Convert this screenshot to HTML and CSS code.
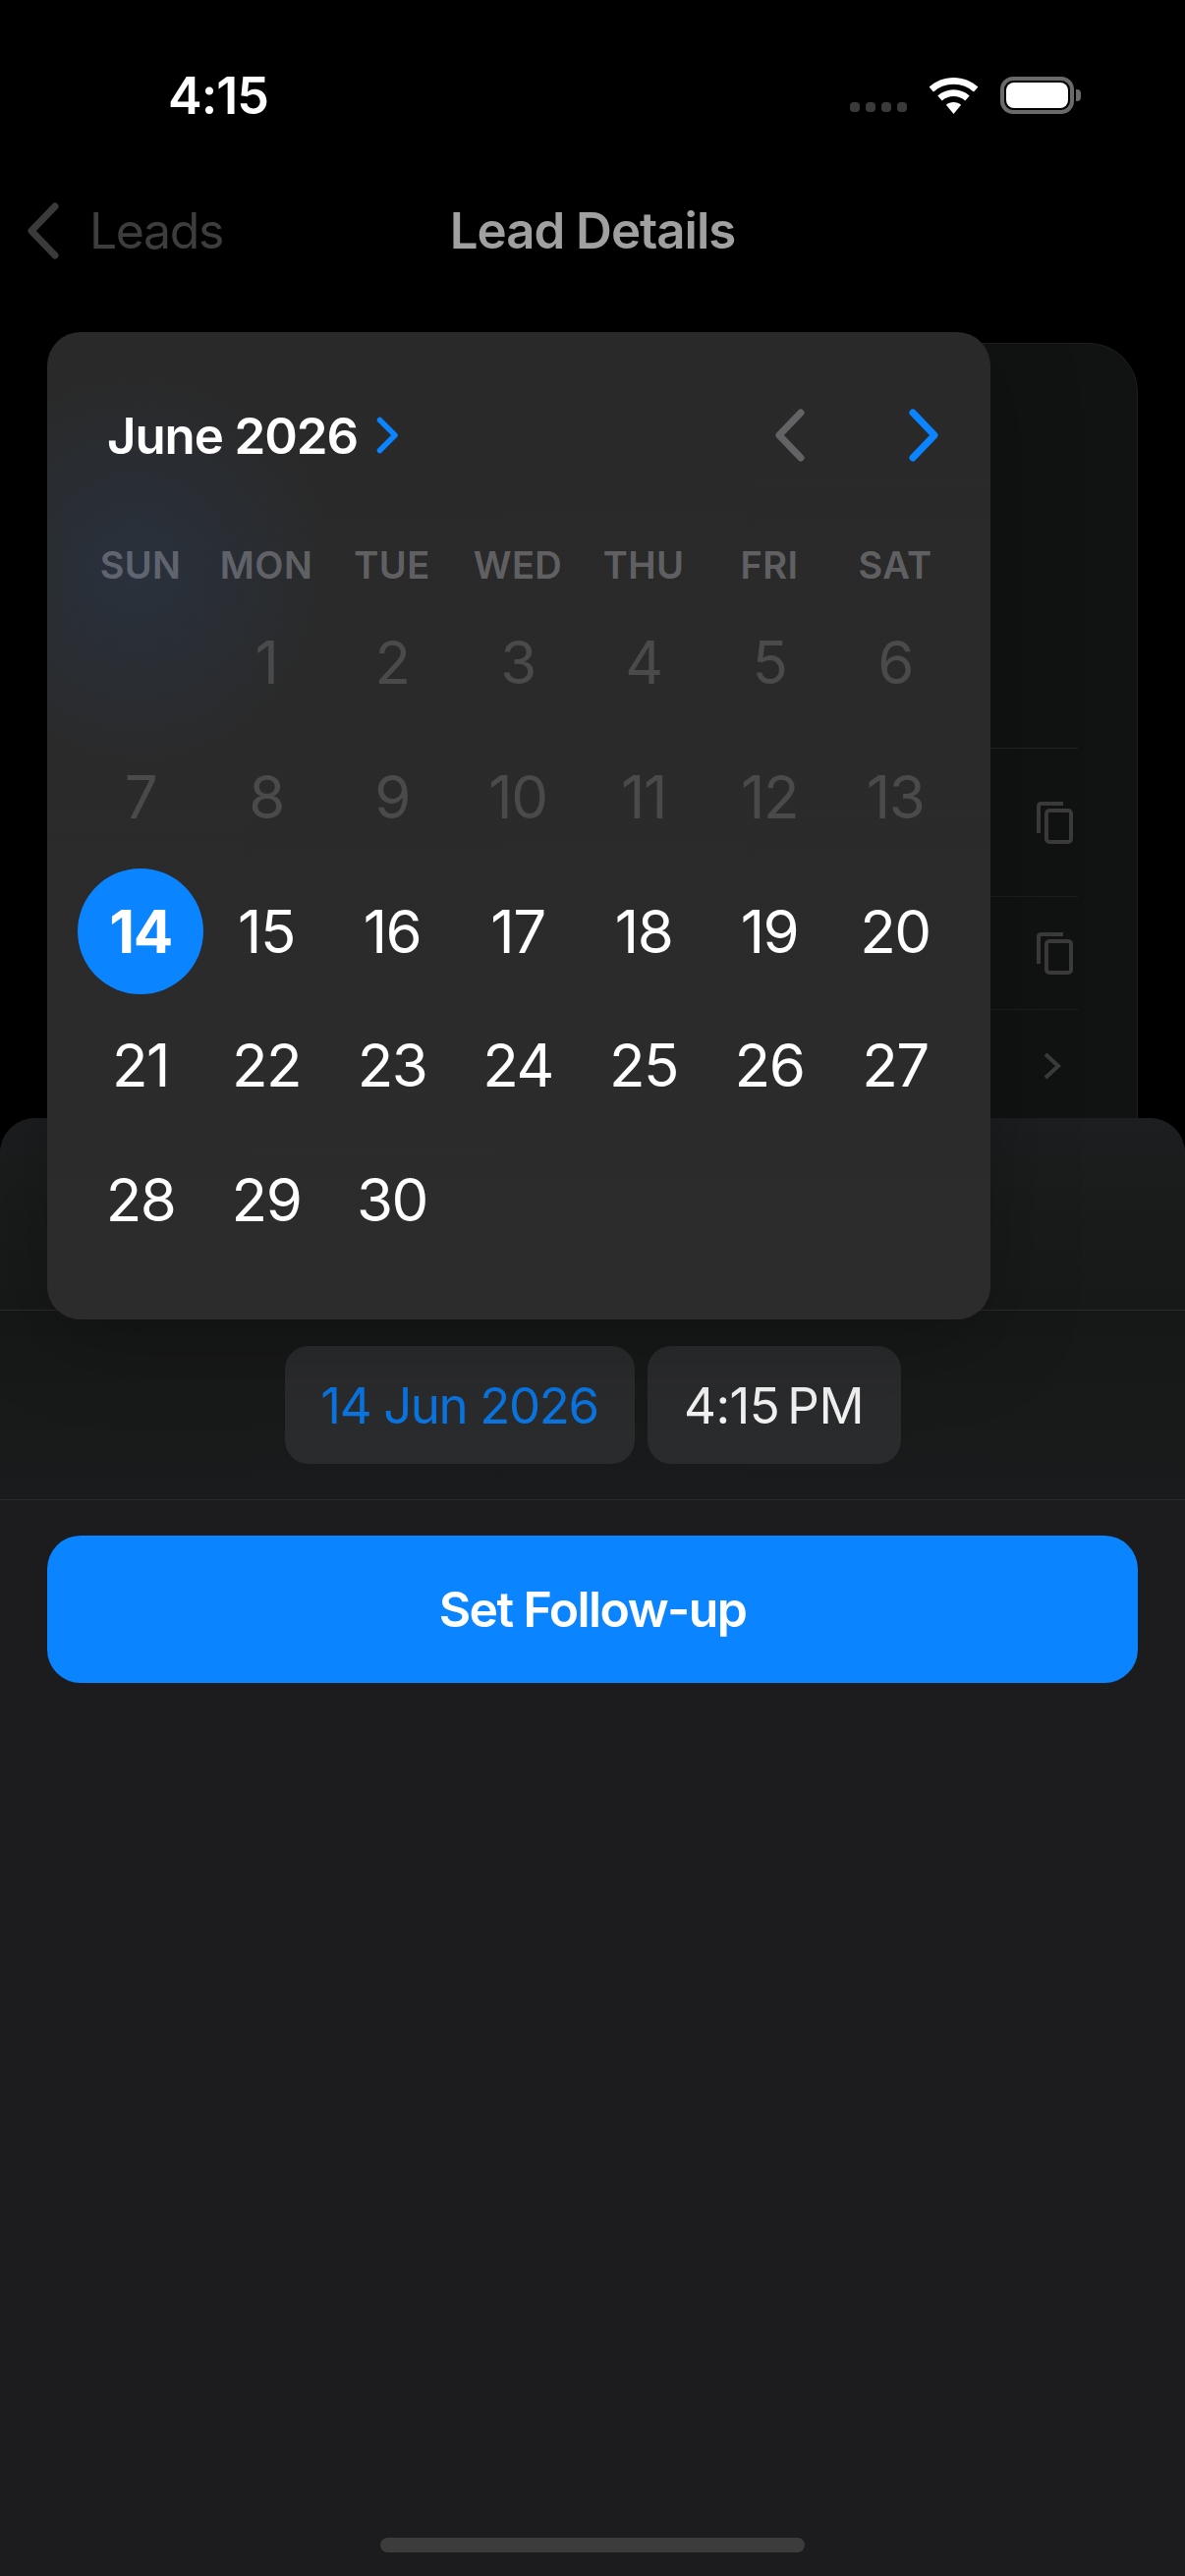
FILE: index.html
```html
<!DOCTYPE html>
<html lang="en">
<head>
  <meta charset="UTF-8" />
  <meta name="viewport" content="width=device-width, initial-scale=1.0" />
  <title>Lead Details</title>
  <link rel="stylesheet" href="styles.css">
</head>
<body>
  <div class="screen">
    <div class="status-bar">
      <span class="clock">4:15</span>
      <div class="status-icons">
        <div class="signal"><i></i><i></i><i></i><i></i></div>
        <svg class="wifi" width="51" height="37" viewBox="0 0 51 37">
          <path d="M25.5 0C15.7 0 7.2 3.6 0.6 9.6L5 14.6C10.4 9.7 17.5 6.7 25.5 6.7S40.600 9.700 46 14.600L50.400 9.600C43.800 3.600 35.300 0 25.500 0Z" fill="#fff"/>
          <path d="M25.500 12.300C19.200 12.300 13.700 14.600 9.300 18.500L13.700 23.500C17 20.700 21 19 25.500 19S34 20.700 37.300 23.500L41.700 18.500C37.300 14.600 31.800 12.300 25.500 12.300Z" fill="#fff"/>
          <path d="M25.500 25C22.600 25 20 26 17.900 27.800L25.500 37L33.100 27.800C31 26 28.400 25 25.500 25Z" fill="#fff"/>
        </svg>
        <div class="battery"><div class="battery-level"></div></div>
      </div>
    </div>

    <div class="nav-bar">
      <div class="nav-back">
        <svg width="34" height="58" viewBox="0 0 34 58"><path d="M29 4L5 29L29 54" fill="none" stroke="#3a3a3a" stroke-width="7" stroke-linecap="round" stroke-linejoin="round"/></svg>
        <span>Leads</span>
      </div>
      <h1 class="nav-title">Lead Details</h1>
    </div>

    <div class="lead-card">
      <div class="card-top"></div>
      <div class="card-row card-row-first">
        <svg width="37" height="43" viewBox="0 0 37 43"><path d="M27 2H4.500Q2 2 2 4.500V32" fill="none" stroke="#3b3b3b" stroke-width="4"/><rect x="10" y="9" width="25" height="32" rx="3" fill="none" stroke="#3b3b3b" stroke-width="4"/></svg>
      </div>
      <div class="card-row">
        <svg width="37" height="43" viewBox="0 0 37 43"><path d="M27 2H4.500Q2 2 2 4.500V32" fill="none" stroke="#3b3b3b" stroke-width="4"/><rect x="10" y="9" width="25" height="32" rx="3" fill="none" stroke="#3b3b3b" stroke-width="4"/></svg>
      </div>
      <div class="card-row card-row-link">
        <svg width="18" height="28" viewBox="0 0 18 28"><path d="M2 2L15 14L2 26" fill="none" stroke="#3b3b3b" stroke-width="4"/></svg>
      </div>
    </div>

    <div class="sheet">
      <div class="sheet-head"></div>
      <div class="picker-row">
        <button class="pill pill-date">14 Jun 2026</button>
        <button class="pill pill-time">4:15<span class="ampm">PM</span></button>
      </div>
      <button class="btn-primary">Set Follow-up</button>
      <div class="home-indicator"></div>
    </div>

    <div class="calendar">
      <div class="cal-header">
        <div class="cal-month">
          <span>June 2026</span>
          <svg width="23" height="38" viewBox="0 0 23 38"><path d="M3.500 3.500L19 19L3.500 34.500" fill="none" stroke="#0a84ff" stroke-width="5.500" stroke-linecap="round" stroke-linejoin="round"/></svg>
        </div>
        <div class="cal-arrows">
          <svg width="32" height="54" viewBox="0 0 32 54"><path d="M27 4L5 27L27 50" fill="none" stroke="#636366" stroke-width="7" stroke-linecap="round" stroke-linejoin="round"/></svg>
          <svg width="32" height="54" viewBox="0 0 32 54"><path d="M5 4L27 27L5 50" fill="none" stroke="#0a84ff" stroke-width="7" stroke-linecap="round" stroke-linejoin="round"/></svg>
        </div>
      </div>

      <div class="cal-weekdays">
        <span>SUN</span><span>MON</span><span>TUE</span><span>WED</span><span>THU</span><span>FRI</span><span>SAT</span>
      </div>

      <div class="cal-days">
        <span></span>
        <span class="day-off">1</span><span class="day-off">2</span><span class="day-off">3</span><span class="day-off">4</span><span class="day-off">5</span><span class="day-off">6</span>
        <span class="day-off">7</span><span class="day-off">8</span><span class="day-off">9</span><span class="day-off">10</span><span class="day-off">11</span><span class="day-off">12</span><span class="day-off">13</span>
        <span class="day-selected">14</span><span>15</span><span>16</span><span>17</span><span>18</span><span>19</span><span>20</span>
        <span>21</span><span>22</span><span>23</span><span>24</span><span>25</span><span>26</span><span>27</span>
        <span>28</span><span>29</span><span>30</span>
      </div>
    </div>
  </div>
</body>
</html>
```

FILE: styles.css
```css
* { margin: 0; padding: 0; box-sizing: border-box; }
html, body { background: #000; }
body {
  font-family: Inter, "Liberation Sans", sans-serif;
  color: #fff;
}
button { font-family: inherit; border: none; }

.screen {
  position: relative;
  width: 1206px;
  height: 2622px;
  overflow: hidden;
  background: #000;
}

/* status bar */
.status-bar {
  height: 170px;
  padding: 72px 113px 0 171px;
  display: flex;
  justify-content: space-between;
  align-items: flex-start;
}
.clock { font-size: 52px; line-height: 52px; font-weight: 600; letter-spacing: -1px; }
.status-icons { display: flex; align-items: flex-end; padding-top: 6px; }
.signal { display: flex; gap: 6px; margin-right: 22px; margin-bottom: 2px; }
.signal i { width: 10px; height: 10px; border-radius: 4px; background: #3a3a3a; }
.wifi { margin-right: 22px; }
.battery {
  position: relative;
  width: 75px;
  height: 38px;
  border: 4px solid #6a6a6a;
  border-radius: 13px;
  padding: 2px;
}
.battery::after {
  content: "";
  position: absolute;
  right: -11px;
  top: 9px;
  width: 5px;
  height: 12px;
  background: #6a6a6a;
  border-radius: 0 4px 4px 0;
}
.battery-level { height: 100%; background: #fff; border-radius: 8px; }

/* nav */
.nav-bar {
  position: relative;
  height: 128px;
  display: flex;
  align-items: center;
  justify-content: center;
}
.nav-back {
  position: absolute;
  left: 27px;
  top: 35px;
  display: flex;
  align-items: center;
  gap: 30px;
  font-size: 50px;
  letter-spacing: -1.400px;
  color: #3d3d3d;
}
.nav-title {
  font-size: 51px;
  font-weight: 600;
  letter-spacing: -1px;
  color: #a0a0a0;
  white-space: nowrap;
}

/* card behind the picker */
.lead-card {
  margin: 51px 48px 0;
  height: 900px;
  background: #111312;
  border: 1px solid #1e1f1f;
  border-radius: 50px;
}
.card-top { height: 411px; }
.card-row {
  height: 115px;
  margin-right: 60px;
  border-top: 1px solid #1c1d1d;
  display: flex;
  align-items: center;
  justify-content: flex-end;
  padding-right: 5px;
}
.card-row-first { height: 151px; border-top-color: #242525; }
.card-row-link { padding-right: 17px; }

/* bottom sheet */
.sheet {
  position: absolute;
  left: 0;
  right: 0;
  top: 1138px;
  bottom: 0;
  background: #1c1c1e;
  border-radius: 36px 36px 0 0;
}
.sheet-head {
  height: 196px;
  background: linear-gradient(180deg, #1c1e1f 0%, #171918 100%);
  border-radius: 36px 36px 0 0;
  border-bottom: 1px solid #2a2b2c;
}
.picker-row {
  display: flex;
  justify-content: center;
  gap: 13px;
  padding: 36px 0;
  background: linear-gradient(180deg, #161817 0%, #1a1b1c 100%);
  border-bottom: 1px solid #2a2b2c;
}
.pill {
  height: 120px;
  border-radius: 24px;
  background: #2a2b2d;
  font-size: 51px;
  letter-spacing: -1.400px;
}
.pill-date { width: 356px; color: #0a74e0; }
.pill-time { width: 258px; color: #f2f2f2; letter-spacing: -0.500px; }
.ampm { margin-left: 8px; }
.btn-primary {
  display: block;
  width: 1110px;
  height: 150px;
  margin: 36px auto 0;
  background: #0a84ff;
  border-radius: 34px;
  color: #fff;
  font-size: 50px;
  font-weight: 600;
  letter-spacing: -1.600px;
}
.home-indicator {
  position: absolute;
  left: 387px;
  bottom: 24px;
  width: 432px;
  height: 15px;
  border-radius: 8px;
  background: #3c3c3c;
}

/* calendar popover */
.calendar {
  position: absolute;
  left: 48px;
  top: 338px;
  width: 960px;
  height: 1005px;
  padding: 0 31px;
  border-radius: 34px;
  background:
    radial-gradient(circle at 90px 240px, rgba(40, 65, 100, 0.32) 0, rgba(40, 65, 100, 0) 200px),
    linear-gradient(180deg, #292929 0%, #2c2c2d 100%);
  box-shadow: 0 20px 90px rgba(0, 0, 0, 0.25);
}
.cal-header {
  height: 210px;
  padding: 0 21px 0 30px;
  display: flex;
  align-items: center;
  justify-content: space-between;
}
.cal-month {
  display: flex;
  align-items: center;
  gap: 19px;
  font-size: 51px;
  font-weight: 600;
  letter-spacing: -1.100px;
}
.cal-arrows { display: flex; gap: 104px; margin-right: 0; }
.cal-weekdays, .cal-days {
  display: grid;
  grid-template-columns: repeat(7, 128px);
  justify-items: center;
  align-items: center;
}
.cal-weekdays {
  height: 54px;
  font-size: 38px;
  font-weight: 600;
  letter-spacing: 0.400px;
  color: rgba(235, 235, 245, 0.3);
}
.cal-days {
  grid-auto-rows: 136.7px;
  margin-top: 4px;
  font-size: 60px;
  letter-spacing: -1.500px;
}
.cal-days span {
  width: 128px;
  height: 128px;
  display: flex;
  align-items: center;
  justify-content: center;
}
.day-off { color: #4a4a4b; }
.day-selected {
  background: #0a84ff;
  border-radius: 50%;
  font-weight: 700;
}
```
